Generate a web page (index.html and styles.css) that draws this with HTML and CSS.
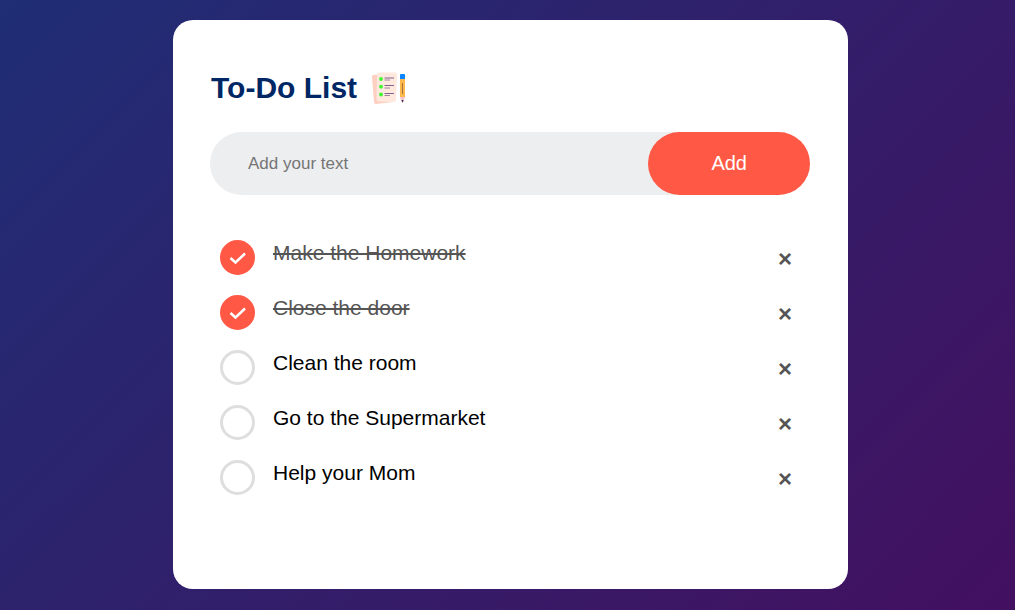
FILE: index.html
```html
<!DOCTYPE html>
<html lang="en">
<head>
<meta charset="utf-8">
<meta name="viewport" content="width=device-width, initial-scale=1">
<title>To-Do List</title>
<link rel="stylesheet" href="styles.css">
</head>
<body>
<main class="todo-app">
  <h1 class="title">To-Do List
    <svg class="title-icon" viewBox="0 0 35 34" aria-hidden="true">
      <path d="M2 4 L20 2 L22 31 L5 33 Q3 33 3 31 L1 6 Q1 4 2 4Z" fill="#ffcfc2"/>
      <path d="M8 1.500 L24 1.500 Q26 1.500 26 3.500 L25 29 Q25 31 23 31 L8 30.500 Q5.500 30.500 5.500 28 L6 3.500 Q6 1.500 8 1.500Z" fill="#ffe8de"/>
      <g fill="#3df52f"><circle cx="10" cy="8" r="1.9"/><circle cx="10" cy="15.700" r="1.9"/><circle cx="10" cy="23.500" r="1.9"/></g>
      <g stroke="#7e6290" stroke-width="1"><path d="M13.500 7H23M13.500 14.500H23M13.500 22.500H23"/><path d="M13.500 9H19M13.500 17H19M13.500 24.500H19" stroke="#a084a0"/></g>
      <path d="M29 7h5v19h-5z" fill="#ffb84c"/>
      <path d="M29 4q0-1 1-1h3q1 0 1 1v4h-5z" fill="#0a84ff"/>
      <path d="M31.500 12v11" stroke="#a3713d" stroke-width="1"/>
      <path d="M29 26h5l-1.500 5h-2z" fill="#f5c3cf"/>
      <path d="M30.500 29h2l-1 3z" fill="#38304a"/>
    </svg>
  </h1>
  <form class="add-row">
    <input class="add-input" type="text" placeholder="Add your text" aria-label="New task">
    <button class="add-button" type="button">Add</button>
  </form>
  <ul class="tasks">
    <li class="task">
      <label class="task-label"><span class="check"><input class="check-box" type="checkbox" checked><svg class="check-mark" viewBox="0 0 35 35" aria-hidden="true"><path d="M10.500 18L15.500 22.500L25 13.500"/></svg></span><span class="task-text">Make the Homework</span></label>
      <button class="remove" type="button" aria-label="Remove Make the Homework">×</button>
    </li>
    <li class="task">
      <label class="task-label"><span class="check"><input class="check-box" type="checkbox" checked><svg class="check-mark" viewBox="0 0 35 35" aria-hidden="true"><path d="M10.500 18L15.500 22.500L25 13.500"/></svg></span><span class="task-text">Close the door</span></label>
      <button class="remove" type="button" aria-label="Remove Close the door">×</button>
    </li>
    <li class="task">
      <label class="task-label"><span class="check"><input class="check-box" type="checkbox"></span><span class="task-text">Clean the room</span></label>
      <button class="remove" type="button" aria-label="Remove Clean the room">×</button>
    </li>
    <li class="task">
      <label class="task-label"><span class="check"><input class="check-box" type="checkbox"></span><span class="task-text">Go to the Supermarket</span></label>
      <button class="remove" type="button" aria-label="Remove Go to the Supermarket">×</button>
    </li>
    <li class="task">
      <label class="task-label"><span class="check"><input class="check-box" type="checkbox"></span><span class="task-text">Help your Mom</span></label>
      <button class="remove" type="button" aria-label="Remove Help your Mom">×</button>
    </li>
  </ul>
</main>
</body>
</html>
```

FILE: styles.css
```css
* {
  box-sizing: border-box;
  margin: 0;
  padding: 0;
  font-family: "Liberation Sans", Arial, sans-serif;
}

body {
  min-height: 100vh;
  padding: 20px 20px 20px 26px;
  background: linear-gradient(135deg, #1f2e75, #431060);
}

.todo-app {
  max-width: 675px;
  margin: 0 auto;
  padding: 50px 38px 84px 37px;
  border-radius: 20px;
  background: #fff;
}

.title {
  display: flex;
  align-items: center;
  gap: 14px;
  margin-bottom: 27px;
  padding-left: 1px;
  color: #002765;
  font-size: 30px;
  line-height: 35px;
}

.title-icon {
  width: 35px;
  height: 34px;
}

.add-row {
  display: flex;
  margin-bottom: 35px;
  border-radius: 40px;
  background: #edeef0;
}

.add-input {
  flex: 1;
  min-width: 0;
  padding-left: 38px;
  border: 0;
  outline: 0;
  background: transparent;
  font-size: 17px;
}

.add-input::placeholder {
  color: #757575;
}

.add-button {
  padding: 20px 63px;
  border: 0;
  border-radius: 40px;
  background: #ff5945;
  color: #fff;
  font-size: 20px;
  line-height: 23px;
  cursor: pointer;
}

.tasks {
  list-style: none;
}

.task {
  display: flex;
  align-items: center;
  padding: 10px 5px 10px 10px;
}

.task-label {
  display: flex;
  flex: 1;
  gap: 18px;
  cursor: pointer;
}

.check {
  display: grid;
}

.check-box,
.check-mark {
  grid-area: 1 / 1;
  width: 35px;
  height: 35px;
}

.check-box {
  appearance: none;
  border: 3px solid #dedede;
  border-radius: 50%;
}

.check-box:checked {
  border-color: #ff5945;
  background: #ff5945;
}

.check-mark {
  fill: none;
  stroke: #fff;
  stroke-width: 2.5;
  pointer-events: none;
}

.task-text {
  font-size: 21px;
  line-height: 26px;
}

.check:has(:checked) + .task-text {
  color: #555;
  text-decoration: line-through 2px;
}

.remove {
  width: 40px;
  height: 35px;
  padding-top: 3px;
  border: 0;
  background: transparent;
  color: #555;
  font-size: 24px;
  font-weight: 700;
  line-height: 32px;
  cursor: pointer;
}
```
